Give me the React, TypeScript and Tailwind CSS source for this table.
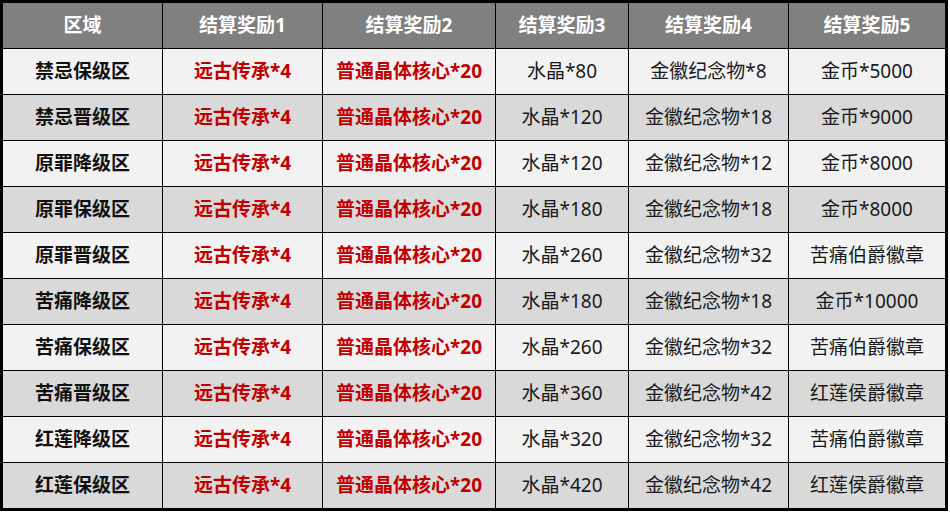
const headers = ['区域', '结算奖励1', '结算奖励2', '结算奖励3', '结算奖励4', '结算奖励5'];

const rows: string[][] = [
  ['禁忌保级区', '远古传承*4', '普通晶体核心*20', '水晶*80', '金徽纪念物*8', '金币*5000'],
  ['禁忌晋级区', '远古传承*4', '普通晶体核心*20', '水晶*120', '金徽纪念物*18', '金币*9000'],
  ['原罪降级区', '远古传承*4', '普通晶体核心*20', '水晶*120', '金徽纪念物*12', '金币*8000'],
  ['原罪保级区', '远古传承*4', '普通晶体核心*20', '水晶*180', '金徽纪念物*18', '金币*8000'],
  ['原罪晋级区', '远古传承*4', '普通晶体核心*20', '水晶*260', '金徽纪念物*32', '苦痛伯爵徽章'],
  ['苦痛降级区', '远古传承*4', '普通晶体核心*20', '水晶*180', '金徽纪念物*18', '金币*10000'],
  ['苦痛保级区', '远古传承*4', '普通晶体核心*20', '水晶*260', '金徽纪念物*32', '苦痛伯爵徽章'],
  ['苦痛晋级区', '远古传承*4', '普通晶体核心*20', '水晶*360', '金徽纪念物*42', '红莲侯爵徽章'],
  ['红莲降级区', '远古传承*4', '普通晶体核心*20', '水晶*320', '金徽纪念物*32', '苦痛伯爵徽章'],
  ['红莲保级区', '远古传承*4', '普通晶体核心*20', '水晶*420', '金徽纪念物*42', '红莲侯爵徽章'],
];

function cellClass(col: number) {
  if (col === 0) return 'font-bold text-[#111]';
  if (col === 1 || col === 2) return 'font-bold text-[#c00000]';
  return 'text-[#1a1a1a]';
}

export default function App() {
  return (
    <div
      className="w-[950px] h-[512px] bg-white"
      style={{ fontFamily: '"Noto Sans", "Noto Sans CJK SC", sans-serif' }}
    >
      <div className="w-[948px] border-[3px] border-black bg-black grid grid-cols-[159px_159px_172px_132px_159px_156px] gap-px text-[19px] leading-none">
        {headers.map((h) => (
          <div
            key={h}
            className="h-[45px] bg-[#808080] text-white font-bold flex items-center justify-center"
          >
            {h}
          </div>
        ))}
        {rows.map((row, i) =>
          row.map((cell, j) => (
            <div
              key={`${i}-${j}`}
              className={`h-[45px] flex items-center justify-center ${
                i % 2 === 0 ? 'bg-[#f2f2f2]' : 'bg-[#d9d9d9]'
              } ${cellClass(j)}`}
            >
              {cell}
            </div>
          ))
        )}
      </div>
    </div>
  );
}
